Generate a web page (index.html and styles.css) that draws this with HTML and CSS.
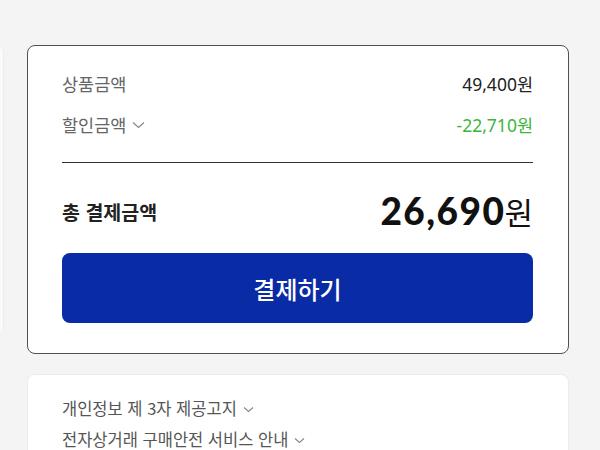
FILE: index.html
```html
<!DOCTYPE html>
<html lang="ko">
<head>
  <meta charset="UTF-8" />
  <meta name="viewport" content="width=device-width, initial-scale=1" />
  <title>결제금액</title>
  <link rel="stylesheet" href="styles.css">
</head>
<body>

<div class="page">
  <!-- 왼쪽 카드 (잘린 부분) -->
  <div class="side"></div>

  <div class="col">
    <div class="card summary">
      <div class="row">
        <span class="label">상품금액</span>
        <span class="value">49,400원</span>
      </div>
      <div class="row">
        <span class="label">할인금액
          <svg class="chev" width="13" height="8" viewBox="0 0 13 8"><path d="M1 1.5 L6.5 6.5 L12 1.5" fill="none" stroke="#888" stroke-width="1.2"/></svg>
        </span>
        <span class="value discount">-22,710원</span>
      </div>

      <div class="divider"></div>

      <div class="total">
        <span class="total-label">총 결제금액</span>
        <span class="total-value"><b>26,690</b>원</span>
      </div>

      <button class="pay">결제하기</button>
    </div>

    <div class="card notice">
      <div class="notice-row">개인정보 제 3자 제공고지
        <svg class="chev" width="11" height="7" viewBox="0 0 11 7"><path d="M1 1.5 L5.5 5.5 L10 1.5" fill="none" stroke="#888" stroke-width="1.1"/></svg>
      </div>
      <div class="notice-row">전자상거래 구매안전 서비스 안내
        <svg class="chev" width="11" height="7" viewBox="0 0 11 7"><path d="M1 1.5 L5.5 5.5 L10 1.5" fill="none" stroke="#888" stroke-width="1.1"/></svg>
      </div>
    </div>
  </div>
</div>

</body>
</html>
```

FILE: styles.css
```css
:root {
  --bg: #f4f4f4;
  --text: #222;
  --muted: #666;
  --green: #3db53d;
  --blue: #0a2ba6;
}

body {
  margin: 0;
  background: var(--bg);
  font-family: 'Noto Sans CJK KR', 'Noto Sans', sans-serif;
  color: var(--text);
}

.page {
  display: flex;
  align-items: flex-start;
  padding-top: 45px;
  gap: 23px;
}

.side {
  width: 3px;
  height: 284px;
  margin-top: 3px;
  background: #fafafa;
  border-right: 1px solid #ececec;
  border-radius: 0 4px 4px 0;
}

.col {
  width: 542px;
  display: flex;
  flex-direction: column;
  gap: 20px;
}

.card {
  background: #fff;
  border-radius: 8px;
}

.summary {
  border: 1px solid #505050;
  padding: 17px 35px 30px 34px;
}

.row {
  display: flex;
  justify-content: space-between;
  align-items: center;
  height: 41px;
}

.label {
  font-size: 17.5px;
  color: var(--muted);
  display: flex;
  align-items: center;
  gap: 6px;
}

.value {
  font-family: 'Noto Sans', 'Noto Sans CJK KR', sans-serif;
  font-size: 17.5px;
  color: var(--text);
}

.value.discount {
  color: var(--green);
}

.chev {
  margin-top: 1px;
}

.divider {
  height: 1px;
  background: #333;
  margin-top: 17px;
}

.total {
  display: flex;
  justify-content: space-between;
  align-items: center;
  height: 50px;
  margin-top: 23px;
}

.total-label {
  font-size: 19.5px;
  font-weight: 700;
  color: #222;
}

.total-value {
  font-size: 31px;
  color: #111;
  display: flex;
  align-items: baseline;
}

.total-value b {
  font-family: Lato, 'Noto Sans', sans-serif;
  font-weight: 900;
  font-size: 37px;
  letter-spacing: 1.5px;
  margin-right: -1px;
}

.pay {
  display: block;
  width: 100%;
  height: 70px;
  margin-top: 17px;
  border: none;
  border-radius: 8px;
  background: var(--blue);
  color: #fff;
  font-family: inherit;
  font-size: 24px;
  font-weight: 500;
  cursor: pointer;
}

.notice {
  border: 1px solid #ececec;
  padding: 18px 34px 20px;
}

.notice-row {
  height: 31px;
  line-height: 31px;
  font-size: 16.5px;
  color: #555;
  display: flex;
  align-items: center;
  gap: 6px;
}
```
